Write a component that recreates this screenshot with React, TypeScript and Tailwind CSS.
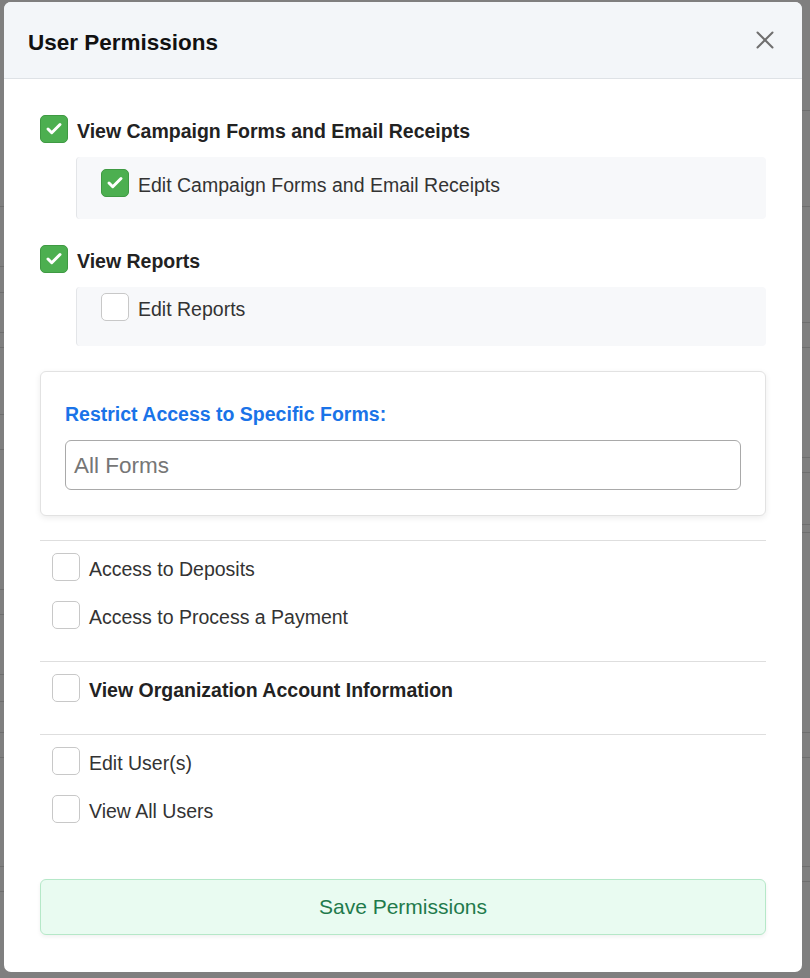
import { Check, X } from "lucide-react";

type Perm = {
  label: string;
  checked?: boolean;
  bold?: boolean;
};

// faint rows of the page behind the backdrop (y of each divider)
const LEFT_LINES = [207, 267, 293, 333, 348, 415, 450, 590, 615, 675, 702, 733, 758, 867, 892];
const RIGHT_LINES = [111, 207, 323, 348, 458, 473, 525, 533, 733, 758, 867, 882];

function PageStrip({ lines, className }: { lines: number[]; className: string }) {
  let prev = 0;
  return (
    <div className={`flex flex-col ${className}`}>
      {lines.map((y) => {
        const h = y - prev;
        prev = y;
        return <div key={y} className="shrink-0 border-b border-[#dcdcdc]" style={{ height: h }} />;
      })}
    </div>
  );
}

function Box({ checked }: { checked?: boolean }) {
  return checked ? (
    <span className="flex size-[28px] shrink-0 items-center justify-center rounded-[5px] border border-[#3f9a43] bg-[#4caf50]">
      <Check className="size-[18px] text-white" strokeWidth={4} />
    </span>
  ) : (
    <span className="size-[28px] shrink-0 rounded-[5px] border border-[#c8c8c8] bg-white" />
  );
}

function PermRow({ perm }: { perm: Perm }) {
  return (
    <label className="flex h-[28px] items-center gap-[9px]">
      <Box checked={perm.checked} />
      <span
        className={
          perm.bold
            ? "pt-[5px] text-[19.5px] font-bold text-[#222]"
            : "pt-[5px] text-[19.5px] text-[#333]"
        }
      >
        {perm.label}
      </span>
    </label>
  );
}

function SubBox({ perm, className }: { perm: Perm; className: string }) {
  return (
    <div
      className={`ml-[36px] rounded-[4px] border-l border-[#e3e5e8] bg-[#f7f8fa] pl-[24px] ${className}`}
    >
      <PermRow perm={perm} />
    </div>
  );
}

function Divider({ className }: { className: string }) {
  return <div className={`h-px bg-[#dedede] ${className}`} />;
}

export default function App() {
  return (
    <div className="relative h-[978px] w-[810px] overflow-hidden bg-white font-[family-name:Liberation_Sans,Arial,sans-serif]">
      {/* page behind */}
      <div className="flex h-full justify-between">
        <PageStrip lines={LEFT_LINES} className="w-[4px]" />
        <PageStrip lines={RIGHT_LINES} className="w-[8px]" />
      </div>
      <div className="absolute inset-0 bg-black/50" />

      {/* modal */}
      <div className="absolute top-[2px] left-[4px] flex h-[970px] w-[798px] flex-col overflow-hidden rounded-[7px] bg-white">
        <div className="flex h-[77px] shrink-0 items-center justify-between border-b border-[#dee2e6] bg-[#f3f6f9] pr-[22px] pl-[24px]">
          <h2 className="pt-[5px] text-[22.5px] font-bold text-[#111]">User Permissions</h2>
          <X className="size-[30px] text-[#6f6f6f]" strokeWidth={1.6} />
        </div>

        <div className="flex flex-1 flex-col px-[36px]">
          <div className="mt-[36px]">
            <PermRow perm={{ label: "View Campaign Forms and Email Receipts", checked: true, bold: true }} />
          </div>
          <SubBox
            className="mt-[14px] pt-[12px] pb-[22px]"
            perm={{ label: "Edit Campaign Forms and Email Receipts", checked: true }}
          />

          <div className="mt-[26px]">
            <PermRow perm={{ label: "View Reports", checked: true, bold: true }} />
          </div>
          <SubBox className="mt-[14px] pt-[6px] pb-[25px]" perm={{ label: "Edit Reports" }} />

          <div className="mt-[25px] rounded-[6px] border border-[#e2e2e2] bg-white px-[24px] pt-[30px] pb-[25px] shadow-[0_2px_6px_rgba(0,0,0,0.08)]">
            <p className="h-[22px] pt-[1px] text-[19.5px] leading-[22px] font-bold text-[#1a73e8]">
              Restrict Access to Specific Forms:
            </p>
            <div className="mt-[16px] flex h-[50px] items-center rounded-[6px] border border-[#a9a9a9] px-[8px] pt-[2px] text-[22.5px] text-[#767676]">
              All Forms
            </div>
          </div>

          <Divider className="mt-[24px]" />
          <div className="flex flex-col gap-[20px] pt-[12px] pl-[12px]">
            <PermRow perm={{ label: "Access to Deposits" }} />
            <PermRow perm={{ label: "Access to Process a Payment" }} />
          </div>

          <Divider className="mt-[32px]" />
          <div className="pt-[12px] pl-[12px]">
            <PermRow perm={{ label: "View Organization Account Information", bold: true }} />
          </div>

          <Divider className="mt-[32px]" />
          <div className="flex flex-col gap-[20px] pt-[12px] pl-[12px]">
            <PermRow perm={{ label: "Edit User(s)" }} />
            <PermRow perm={{ label: "View All Users" }} />
          </div>

          <button
            type="button"
            className="mt-[56px] flex h-[56px] items-center justify-center rounded-[6px] border border-[#b5e8c8] bg-[#e9fbf1] text-[21px] text-[#1f7a4c] shadow-[0_2px_4px_rgba(0,0,0,0.06)]"
          >
            Save Permissions
          </button>
        </div>
      </div>
    </div>
  );
}
